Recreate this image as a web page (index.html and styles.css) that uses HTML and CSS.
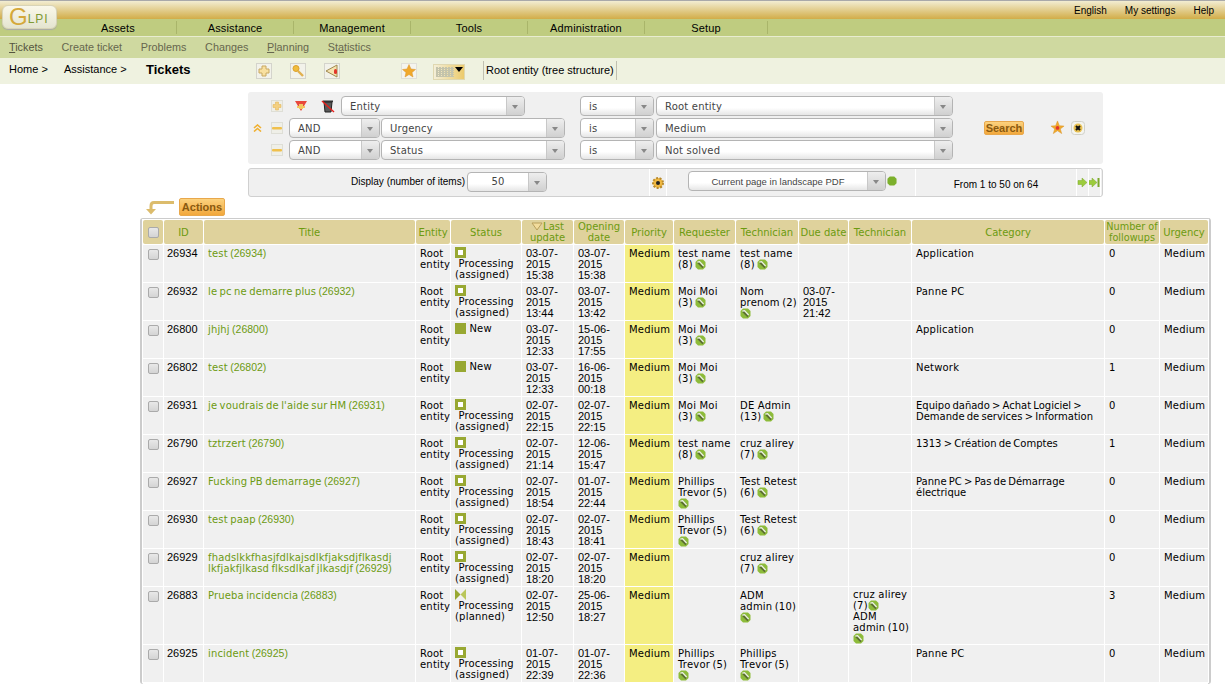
FILE: index.html
```html
<!DOCTYPE html>
<html lang="en">
<head>
<meta charset="utf-8">
<title>GLPI - Tickets</title>
<link rel="stylesheet" href="styles.css">
</head>
<body>
<svg class="defs" width="0" height="0" aria-hidden="true">
  <symbol id="i-tool" viewBox="0 0 11 11"><polygon points="3,0.5 8,0.5 10.5,3 10.5,8 8,10.5 3,10.5 0.5,8 0.5,3" fill="#8dbb3a"/><path d="M3 3.6 L8 8.6" stroke="#5a6a34" stroke-width="1.6"/><path d="M2.4 3.2 L4.6 2.6 L8.6 7" fill="none" stroke="#ececec" stroke-width="1.2"/></symbol>
  <symbol id="i-assigned" viewBox="0 0 11 11"><rect width="11" height="11" fill="#98a832"/><rect x="3" y="3" width="5" height="5" fill="#fff"/></symbol>
  <symbol id="i-new" viewBox="0 0 11 11"><rect width="11" height="11" fill="#98a832"/></symbol>
  <symbol id="i-planned" viewBox="0 0 11 11"><polygon points="0,0 5.5,5.5 0,11" fill="#98a832"/><polygon points="11,0 5.5,5.5 11,11" fill="#b9c65a"/></symbol>
  <symbol id="i-plus" viewBox="0 0 16 16"><rect x=".5" y=".5" width="15" height="15" fill="#f2f2ea" stroke="#d4d4cc"/><path d="M6 3 H10 V6 H13 V10 H10 V13 H6 V10 H3 V6 H6 Z" fill="#f8e0a0" stroke="#c8a860"/></symbol>
  <symbol id="i-search" viewBox="0 0 16 16"><rect x=".5" y=".5" width="15" height="15" fill="#f2f2ea" stroke="#d4d4cc"/><circle cx="6" cy="5.5" r="3" fill="#f0bd3c" stroke="#dca02c"/><path d="M8 8 L13 13" stroke="#e0b050" stroke-width="2.4"/></symbol>
  <symbol id="i-back" viewBox="0 0 16 16"><rect x=".5" y=".5" width="15" height="15" fill="#f2f2ea" stroke="#d4d4cc"/><polygon points="2,8 13,2 13,14" fill="#f6e3b0" stroke="#a08a50"/><rect x="10" y="6" width="3" height="5" rx="1.5" fill="#e2352a"/></symbol>
  <symbol id="i-star" viewBox="0 0 16 16"><rect x=".5" y=".5" width="15" height="15" fill="#f4f4ee" stroke="#e0e0d8"/><polygon points="8,1.5 10,6 14.5,6.5 11,9.5 12,14 8,11.5 4,14 5,9.5 1.5,6.5 6,6" fill="#f0a92c" stroke="#d8932a" stroke-width=".5"/></symbol>
  <symbol id="i-starred" viewBox="0 0 16 16"><polygon points="8,1 10,6 15,6.5 11,9.5 12.5,14.5 8,11.5 3.5,14.5 5,9.5 1,6.5 6,6" fill="#f0a92c" stroke="#d8932a" stroke-width=".5"/><circle cx="8" cy="8.5" r="2" fill="#e2352a"/></symbol>
  <symbol id="i-sub" viewBox="0 0 12 12"><rect x=".5" y=".5" width="11" height="11" fill="#efefe8" stroke="#deded6"/><rect x="1" y="5" width="10" height="2.4" rx="1" fill="#f0c04c"/></symbol>
  <symbol id="i-add" viewBox="0 0 12 12"><rect x=".5" y=".5" width="11" height="11" fill="#efefe8" stroke="#deded6"/><path d="M4.5 2 H7.5 V4.5 H10 V7.5 H7.5 V10 H4.5 V7.5 H2 V4.5 H4.5 Z" fill="#f4d080" stroke="#e0b050" stroke-width=".5"/></symbol>
</svg>

<header class="top">
  <div class="bar-gold">
    <nav class="prefs"><a>English</a><a>My settings</a><a>Help</a></nav>
  </div>
  <div class="logo"><span class="logo-g">G</span><span class="logo-t">LPI</span></div>
  <nav class="menu">
    <a class="m1">Assets</a><a class="m2">Assistance</a><a class="m3">Management</a><a class="m4">Tools</a><a class="m5">Administration</a><a class="m6">Setup</a>
  </nav>
  <nav class="submenu">
    <a class="active"><u>T</u>ickets</a><a>Create ticket</a><a>Problems</a><a>Changes</a><a><u>P</u>lanning</a><a>St<u>a</u>tistics</a>
  </nav>
  <div class="crumbs">
    <span class="c-home">Home &gt;</span><span class="c-ass">Assistance &gt;</span><strong class="c-title">Tickets</strong>
    <svg class="ci ci1"><use href="#i-plus"/></svg>
    <svg class="ci ci2"><use href="#i-search"/></svg>
    <svg class="ci ci3"><use href="#i-back"/></svg>
    <svg class="ci ci4"><use href="#i-star"/></svg>
    <span class="ci-grid"><i class="grid-lines"></i><i class="grid-tri"></i></span>
    <span class="entity">Root entity (tree structure)</span>
  </div>
</header>

<main class="content">
  <section class="search">
    <div class="s-rows">
      <div class="s-row">
        <span class="s-up"></span>
        <span class="s-ic"><svg class="ic12"><use href="#i-add"/></svg></span>
        <svg class="ic-red" viewBox="0 0 14 14"><polygon points="1,2 13,2 7,12" fill="#e8483c"/><path d="M5 5 H9 V7 H11 V9 H9 V10 H5 V9 H3 V7 H5 Z" fill="#f4c760"/></svg>
        <svg class="ic-trash" viewBox="0 0 14 14"><path d="M3 3 H11 L10 13 H4 Z" fill="#5a5a5a" stroke="#222"/><rect x="2" y="1.5" width="10" height="1.6" fill="#333"/><path d="M1 2 L13 13" stroke="#e8201c" stroke-width="1.4"/></svg>
        <div class="sel w-entity"><span>Entity</span><b></b></div>
        <div class="sel w-is"><span>is</span><b></b></div>
        <div class="sel w-val"><span>Root entity</span><b></b></div>
      </div>
      <div class="s-row">
        <span class="s-up"><svg class="chev" viewBox="0 0 9 8"><path d="M1 4 L4.5 1 L8 4 M1 7.5 L4.5 4.5 L8 7.5" fill="none" stroke="#f0b030" stroke-width="1.6"/></svg></span>
        <span class="s-ic"><svg class="ic12"><use href="#i-sub"/></svg></span>
        <div class="sel w-and"><span>AND</span><b></b></div>
        <div class="sel w-field"><span>Urgency</span><b></b></div>
        <div class="sel w-is"><span>is</span><b></b></div>
        <div class="sel w-val"><span>Medium</span><b></b></div>
      </div>
      <div class="s-row">
        <span class="s-up"></span>
        <span class="s-ic"><svg class="ic12"><use href="#i-sub"/></svg></span>
        <div class="sel w-and"><span>AND</span><b></b></div>
        <div class="sel w-field"><span>Status</span><b></b></div>
        <div class="sel w-is"><span>is</span><b></b></div>
        <div class="sel w-val"><span>Not solved</span><b></b></div>
      </div>
    </div>
    <button class="btn btn-search">Search</button>
    <svg class="ic-save"><use href="#i-starred"/></svg>
    <svg class="ic-reset" viewBox="0 0 14 14"><rect x=".5" y=".5" width="13" height="13" rx="3" fill="#f4f4ee" stroke="#d0d0c8"/><circle cx="7" cy="7" r="4.5" fill="#e8c050"/><path d="M5 5 L9 9 M9 5 L5 9" stroke="#111" stroke-width="2"/></svg>
  </section>

  <section class="pager">
    <div class="p-display">
      <label>Display (number of items)</label>
      <div class="sel w-num"><span>50</span><b></b></div>
    </div>
    <div class="p-gear"><svg viewBox="0 0 14 14"><circle cx="7" cy="7" r="5" fill="#f0b840" stroke="#b88a2c" stroke-width="2" stroke-dasharray="2 1.5"/><circle cx="7" cy="7" r="2" fill="#222"/></svg></div>
    <div class="p-export">
      <div class="sel w-export"><span>Current page in landscape PDF</span><b></b></div>
      <svg class="hex" viewBox="0 0 11 11"><polygon points="3,0.5 8,0.5 10.5,3 10.5,8 8,10.5 3,10.5 0.5,8 0.5,3" fill="#7cb02c"/></svg>
    </div>
    <div class="p-count">From 1 to 50 on 64</div>
    <div class="p-nav"><svg viewBox="0 0 11 11"><path d="M1 3.5 H5 V1 L10 5.5 L5 10 V7.5 H1 Z" fill="#9ccc3c" stroke="#7ca82c" stroke-width=".5"/></svg></div>
    <div class="p-nav"><svg viewBox="0 0 11 11"><path d="M0 3.5 H3 V1 L8 5.5 L3 10 V7.5 H0 Z" fill="#9ccc3c" stroke="#7ca82c" stroke-width=".5"/><rect x="8.5" y="1" width="2" height="9" fill="#7ca82c"/></svg></div>
  </section>

  <div class="actions">
    <svg class="act-arrow" viewBox="0 0 29 15"><path d="M28 2.5 H8 Q5 2.5 5 6 V9" fill="none" stroke="#dcbc6c" stroke-width="3"/><polygon points="0,9 10,9 5,14.5" fill="#dcbc6c"/></svg>
    <button class="btn btn-actions">Actions</button>
  </div>

  <div class="table-box">
    <table class="grid">
      <colgroup>
        <col class="c0"><col class="c1"><col class="c2"><col class="c3"><col class="c4"><col class="c5"><col class="c6"><col class="c7"><col class="c8"><col class="c9"><col class="c10"><col class="c11"><col class="c12"><col class="c13"><col class="c14">
      </colgroup>
      <thead>
        <tr>
          <th><i class="cb"></i></th><th>ID</th><th>Title</th><th>Entity</th><th>Status</th><th><svg class="sort" viewBox="0 0 12 9"><polygon points="1,1 11,1 6,8" fill="#f2dc9c" stroke="#b8a05c"/></svg>Last update</th><th>Opening date</th><th>Priority</th><th>Requester</th><th>Technician</th><th>Due date</th><th>Technician</th><th>Category</th><th>Number of<br>followups</th><th>Urgency</th>
        </tr>
      </thead>
      <tbody>
        <tr>
          <td class="tc"><i class="cb"></i></td><td class="id">26934</td><td><a>test <span class="n">(26934)</span></a></td><td>Root entity</td><td><svg class="st"><use href="#i-assigned"/></svg><br>&nbsp;Processing (assigned)</td><td>03-07-2015 15:38</td><td>03-07-2015 15:38</td><td class="pri">Medium</td><td>test name (8)<svg class="tool"><use href="#i-tool"/></svg></td><td>test name (8)<svg class="tool"><use href="#i-tool"/></svg></td><td></td><td></td><td>Application</td><td>0</td><td>Medium</td>
        </tr>
        <tr>
          <td class="tc"><i class="cb"></i></td><td class="id">26932</td><td><a>le pc ne demarre plus <span class="n">(26932)</span></a></td><td>Root entity</td><td><svg class="st"><use href="#i-assigned"/></svg><br>&nbsp;Processing (assigned)</td><td>03-07-2015 13:44</td><td>03-07-2015 13:42</td><td class="pri">Medium</td><td>Moi Moi (3)<svg class="tool"><use href="#i-tool"/></svg></td><td>Nom<br><span class="nw">prenom (2)</span><br><svg class="tool"><use href="#i-tool"/></svg></td><td>03-07-2015 21:42</td><td></td><td>Panne PC</td><td>0</td><td>Medium</td>
        </tr>
        <tr>
          <td class="tc"><i class="cb"></i></td><td class="id">26800</td><td><a>jhjhj <span class="n">(26800)</span></a></td><td>Root entity</td><td><svg class="st"><use href="#i-new"/></svg>&nbsp;New</td><td>03-07-2015 12:33</td><td>15-06-2015 17:55</td><td class="pri">Medium</td><td>Moi Moi (3)<svg class="tool"><use href="#i-tool"/></svg></td><td></td><td></td><td></td><td>Application</td><td>0</td><td>Medium</td>
        </tr>
        <tr>
          <td class="tc"><i class="cb"></i></td><td class="id">26802</td><td><a>test <span class="n">(26802)</span></a></td><td>Root entity</td><td><svg class="st"><use href="#i-new"/></svg>&nbsp;New</td><td>03-07-2015 12:33</td><td>16-06-2015 00:18</td><td class="pri">Medium</td><td>Moi Moi (3)<svg class="tool"><use href="#i-tool"/></svg></td><td></td><td></td><td></td><td>Network</td><td>1</td><td>Medium</td>
        </tr>
        <tr>
          <td class="tc"><i class="cb"></i></td><td class="id">26931</td><td><a>je voudrais de l'aide sur HM <span class="n">(26931)</span></a></td><td>Root entity</td><td><svg class="st"><use href="#i-assigned"/></svg><br>&nbsp;Processing (assigned)</td><td>02-07-2015 22:15</td><td>02-07-2015 22:15</td><td class="pri">Medium</td><td>Moi Moi (3)<svg class="tool"><use href="#i-tool"/></svg></td><td>DE Admin (13)<svg class="tool"><use href="#i-tool"/></svg></td><td></td><td></td><td class="cat">Equipo dañado &gt; Achat Logiciel &gt;<br>Demande de services &gt; Information</td><td>0</td><td>Medium</td>
        </tr>
        <tr>
          <td class="tc"><i class="cb"></i></td><td class="id">26790</td><td><a>tztrzert <span class="n">(26790)</span></a></td><td>Root entity</td><td><svg class="st"><use href="#i-assigned"/></svg><br>&nbsp;Processing (assigned)</td><td>02-07-2015 21:14</td><td>12-06-2015 15:47</td><td class="pri">Medium</td><td>test name (8)<svg class="tool"><use href="#i-tool"/></svg></td><td>cruz alirey (7)<svg class="tool"><use href="#i-tool"/></svg></td><td></td><td></td><td class="cat">1313 &gt; Création de Comptes</td><td>1</td><td>Medium</td>
        </tr>
        <tr>
          <td class="tc"><i class="cb"></i></td><td class="id">26927</td><td><a>Fucking PB demarrage <span class="n">(26927)</span></a></td><td>Root entity</td><td><svg class="st"><use href="#i-assigned"/></svg><br>&nbsp;Processing (assigned)</td><td>02-07-2015 18:54</td><td>01-07-2015 22:44</td><td class="pri">Medium</td><td>Phillips<br><span class="nw">Trevor (5)</span><br><svg class="tool"><use href="#i-tool"/></svg></td><td>Test Retest (6)<svg class="tool"><use href="#i-tool"/></svg></td><td></td><td></td><td class="cat">Panne PC &gt; Pas de Démarrage<br>électrique</td><td>0</td><td>Medium</td>
        </tr>
        <tr>
          <td class="tc"><i class="cb"></i></td><td class="id">26930</td><td><a>test paap <span class="n">(26930)</span></a></td><td>Root entity</td><td><svg class="st"><use href="#i-assigned"/></svg><br>&nbsp;Processing (assigned)</td><td>02-07-2015 18:43</td><td>02-07-2015 18:41</td><td class="pri">Medium</td><td>Phillips<br><span class="nw">Trevor (5)</span><br><svg class="tool"><use href="#i-tool"/></svg></td><td>Test Retest (6)<svg class="tool"><use href="#i-tool"/></svg></td><td></td><td></td><td></td><td>0</td><td>Medium</td>
        </tr>
        <tr>
          <td class="tc"><i class="cb"></i></td><td class="id">26929</td><td><a>fhadslkkfhasjfdlkajsdlkfjaksdjflkasdj lkfjakfjlkasd flksdlkaf jlkasdjf <span class="n">(26929)</span></a></td><td>Root entity</td><td><svg class="st"><use href="#i-assigned"/></svg><br>&nbsp;Processing (assigned)</td><td>02-07-2015 18:20</td><td>02-07-2015 18:20</td><td class="pri">Medium</td><td></td><td>cruz alirey (7)<svg class="tool"><use href="#i-tool"/></svg></td><td></td><td></td><td></td><td>0</td><td>Medium</td>
        </tr>
        <tr>
          <td class="tc"><i class="cb"></i></td><td class="id">26883</td><td><a>Prueba incidencia <span class="n">(26883)</span></a></td><td>Root entity</td><td><svg class="st"><use href="#i-planned"/></svg><br>&nbsp;Processing (planned)</td><td>02-07-2015 12:50</td><td>25-06-2015 18:27</td><td class="pri">Medium</td><td></td><td>ADM<br><span class="nw">admin (10)</span><br><svg class="tool"><use href="#i-tool"/></svg></td><td></td><td>cruz alirey<br>(7)<svg class="tool"><use href="#i-tool"/></svg><br>ADM<br><span class="nw">admin (10)</span><br><svg class="tool"><use href="#i-tool"/></svg></td><td></td><td>3</td><td>Medium</td>
        </tr>
        <tr>
          <td class="tc"><i class="cb"></i></td><td class="id">26925</td><td><a>incident <span class="n">(26925)</span></a></td><td>Root entity</td><td><svg class="st"><use href="#i-assigned"/></svg><br>&nbsp;Processing (assigned)</td><td>01-07-2015 22:39</td><td>01-07-2015 22:36</td><td class="pri">Medium</td><td>Phillips<br><span class="nw">Trevor (5)</span><br><svg class="tool"><use href="#i-tool"/></svg></td><td>Phillips<br><span class="nw">Trevor (5)</span><br><svg class="tool"><use href="#i-tool"/></svg></td><td></td><td></td><td>Panne PC</td><td>0</td><td>Medium</td>
        </tr>
      </tbody>
    </table>
  </div>
</main>
</body>
</html>
```
FILE: styles.css
```css
html { overflow: hidden; height: 684px; }
body { margin: 0; background: #fff; color: #000; font: 10px/11px "DejaVu Sans", Verdana, sans-serif; height: 684px; overflow: hidden; }
.defs { position: absolute; }
a { color: inherit; text-decoration: none; }

/* header */
.top { position: relative; }
.bar-gold { height: 19px; border-top: 1px solid #a9a9a9; box-sizing: border-box; background: linear-gradient(#f2edd2, #d2ad48); display: flex; justify-content: flex-end; align-items: center; }
.prefs { display: flex; gap: 18px; padding-right: 11px; font-family: "Liberation Sans", sans-serif; font-size: 10px; }
.logo { position: absolute; left: 2px; top: 5px; width: 53px; height: 22px; border: 1px solid #d8d4b8; border-radius: 6px; background: linear-gradient(#faf8ea, #e4e4d0); display: flex; align-items: center; font-family: "Liberation Sans", sans-serif; box-shadow: 0 1px 1px #aaa; }
.logo-g { color: #d4a83a; font-size: 24px; margin-left: 6px; line-height: 22px; }
.logo-t { color: #7f9a35; font-size: 12px; letter-spacing: 1px; padding-top: 5px; }
.menu { height: 17px; background: #bfcc80; border-bottom: 1px solid #e8ecd0; display: flex; padding-left: 60px; font: 11px/17px "Liberation Sans", sans-serif; letter-spacing: .15px; }
.menu a { text-align: center; border-right: 1px solid #a9b56a; height: 13px; line-height: 15px; margin-top: 2px; }
.m1, .m2, .m3, .m4, .m5 { width: 116px; }
.m6 { width: 122px; }
.submenu { height: 21px; background: #cfd9a0; display: flex; font: 10.8px/20px "Liberation Sans", sans-serif; color: #66664e; padding-left: 9px; gap: 18.7px; }
.submenu .active { color: #55553f; }
.crumbs { height: 26px; background: #eff2e0; position: relative; font: 11px/22px "Liberation Sans", sans-serif; display: flex; align-items: flex-start; padding-left: 9px; }
.c-home { width: 55px; }
.c-ass { width: 82px; }
.c-title { font-size: 13px; line-height: 24px; width: 110px; }
.ci { width: 16px; height: 16px; margin-top: 5px; }
.ci1 { margin-right: 18px; } .ci2 { margin-right: 18px; } .ci3 { margin-right: 61px; } .ci4 { margin-right: 16px; }
.ci-grid { width: 30px; height: 14px; margin-top: 6px; margin-right: 18px; border: 1px solid #e0d8b0; background: linear-gradient(90deg, #f4efd8, #eccb6c); position: relative; display: block; }
.grid-lines { position: absolute; left: 2px; top: 2px; width: 18px; height: 10px; background: repeating-linear-gradient(0deg, #c4c4ac 0 1px, transparent 1px 2px), repeating-linear-gradient(90deg, #c4c4ac 0 2px, transparent 2px 3px); }
.grid-tri { position: absolute; right: 1px; top: 2px; border: 4px solid transparent; border-top: 5px solid #000; }
.entity { border-left: 1px solid #c0c0b0; border-right: 1px solid #c0c0b0; padding: 0 2px; height: 19px; line-height: 19px; margin-top: 3px; }

/* search */
.content { padding-left: 140px; position: relative; }
.search { margin: 8px 0 0 108px; width: 855px; height: 72px; box-sizing: border-box; background: #f0f0f0; border-radius: 3px; display: flex; align-items: center; position: relative; padding: 4px 0; }
.s-rows { display: flex; flex-direction: column; gap: 2px; width: 705px; }
.s-row { display: flex; align-items: center; height: 20px; }
.s-up { width: 19px; display: flex; justify-content: center; flex: none; }
.chev { width: 9px; height: 8px; }
.s-ic { width: 22px; display: flex; justify-content: flex-start; flex: none; padding-left: 4px; box-sizing: border-box; }
.ic12 { width: 12px; height: 12px; }
.ic-red { width: 14px; height: 14px; margin: 0 13px 0 5px; flex: none; }
.ic-trash { width: 14px; height: 14px; margin-right: 6px; flex: none; }
.sel { height: 20px; box-sizing: border-box; border: 1px solid #b4b4b4; border-radius: 4px; background: linear-gradient(#fff 60%, #e6e6e6); display: flex; align-items: center; color: #444; font: 10px/18px "DejaVu Sans", sans-serif; flex: none; overflow: hidden; letter-spacing: .2px; }
.sel span { flex: 1; padding: 1px 0 0 8px; white-space: nowrap; }
.sel b { width: 17px; height: 18px; border-left: 1px solid #c8c8c8; background: linear-gradient(#eee, #d0d0d0); position: relative; flex: none; }
.sel b::after { content: ""; position: absolute; left: 5px; top: 8px; border: 3px solid transparent; border-top: 4px solid #888; }
.w-entity { width: 184px; margin-right: 55px; }
.w-and { width: 91px; margin-right: 1px; }
.w-field { width: 184px; margin-right: 15px; }
.w-is { width: 74px; margin-right: 2px; }
.w-val { width: 297px; }
.btn { font: bold 11px/16px "Liberation Sans", sans-serif; color: #8a5a10; background: linear-gradient(#fcd27e, #f2a83c); border: 1px solid #e8a84c; border-radius: 2px; padding: 0; }
.btn-search { width: 40px; height: 14px; line-height: 12px; position: absolute; left: 736px; top: 29px; }
.ic-save { width: 15px; height: 15px; position: absolute; left: 802px; top: 28px; }
.ic-reset { width: 14px; height: 14px; position: absolute; left: 823px; top: 29px; }

/* pager */
.pager { margin: 4px 0 0 108px; width: 855px; height: 29px; box-sizing: border-box; border: 1px solid #d0d0d0; border-radius: 3px; background: #f0f0f0; display: flex; font-family: "Liberation Sans", sans-serif; font-size: 10px; }
.pager > div { border-right: 1px solid #fff; display: flex; align-items: center; }
.p-display { width: 401px; justify-content: flex-end; gap: 2px; padding: 0 102px 2px 0; box-sizing: border-box; }
.p-gear { width: 16px; justify-content: center; flex: none; }
.p-gear svg { width: 14px; height: 14px; }
.p-export { width: 249px; padding: 0 0 3px 21px; box-sizing: border-box; flex: none; }
.p-count { width: 161px; justify-content: center; flex: none; padding-top: 3px; box-sizing: border-box; }
.p-nav { width: 11px; justify-content: center; flex: none; }
.p-nav svg { width: 11px; height: 11px; }
.w-num { width: 80px; }
.w-num span, .w-export span { text-align: center; padding-left: 0; }
.w-export { width: 198px; font-family: "Liberation Sans", sans-serif; font-size: 9.5px; letter-spacing: 0; }
.hex { width: 10px; height: 10px; flex: none; margin-left: 1px; }

/* actions */
.actions { display: flex; align-items: center; gap: 4px; height: 18px; margin-top: 1px; padding-left: 6px; }
.act-arrow { width: 29px; height: 15px; }
.btn-actions { width: 46px; height: 18px; }

/* table */
.table-box { width: 1071px; margin-top: 2px; box-sizing: border-box; border: 2px solid #ccc; border-top-width: 1px; border-right-width: 3px; border-bottom: none; border-radius: 3px; height: 466px; }
.grid { table-layout: fixed; width: 1066px; border-collapse: separate; border-spacing: 1px; background: #fff; }
.c0 { width: 20px; } .c1 { width: 39px; } .c2 { width: 211px; } .c3 { width: 34px; } .c4 { width: 70px; } .c5 { width: 51px; } .c6 { width: 50px; } .c7 { width: 48px; } .c8 { width: 61px; } .c9 { width: 62px; } .c10 { width: 49px; } .c11 { width: 62px; } .c12 { width: 192px; } .c13 { width: 54px; } .c14 { width: 48px; }
th { height: 24px; padding: 0; background: #dfd29c; color: #6c9a10; font: normal 10px/11px "DejaVu Sans", sans-serif; text-align: center; border-radius: 2px; }
th:nth-child(14) { font-size: 9.7px; }
td { height: 37px; padding: 3px 4px 0; box-sizing: border-box; background: #f0f0f0; vertical-align: top; letter-spacing: .2px; }
td:nth-child(5) { padding-top: 2px; }
td:nth-child(6), td:nth-child(7), td:nth-child(11) { font: 11px/11px "Liberation Sans", sans-serif; letter-spacing: 0; }
td:nth-child(9), td:nth-child(10), td:nth-child(12) { padding-right: 1px; }
td:nth-child(12) { padding-top: 2px; }
td a { color: #6c9a10; letter-spacing: .15px; word-spacing: -1px; }
td.cat { letter-spacing: 0; word-spacing: -1px; white-space: nowrap; }
.n { font: 10.5px/11px "Liberation Sans", sans-serif; word-spacing: 0; letter-spacing: 0; }
.nw { white-space: nowrap; word-spacing: -1px; }
.id { font-family: "Liberation Sans", sans-serif; font-size: 11px; letter-spacing: 0; padding-left: 3px; }
.pri { background: #f4ee82; }
.tc { text-align: center; padding: 4px 0 0; }
.cb { display: inline-block; width: 9px; height: 9px; border: 1px solid #aaa; border-radius: 2px; background: linear-gradient(#e8e8e8, #d4d4d4); vertical-align: top; }
.st { width: 11px; height: 11px; vertical-align: top; }
.tool { width: 11px; height: 11px; margin-left: 2px; vertical-align: top; }
td br + .tool { margin-left: 0; }
.sort { width: 12px; height: 9px; vertical-align: top; margin-top: 1px; }
```
